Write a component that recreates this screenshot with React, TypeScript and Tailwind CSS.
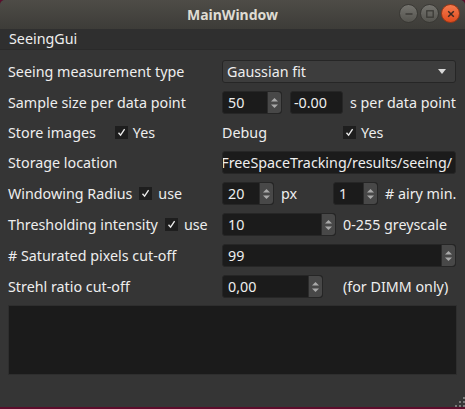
import type { ReactNode } from 'react'

const FONT = { fontFamily: '"Noto Sans", "DejaVu Sans", sans-serif' }

function Check() {
  return (
    <span className="flex h-[13px] w-[13px] shrink-0 items-center justify-center bg-[#1e1e1e]">
      <svg width="9" height="9" viewBox="0 0 9 9">
        <path d="M1.5 4.8 L3.6 7.2 L7.6 1.2" fill="none" stroke="#e8e8e8" strokeWidth="1.4" />
      </svg>
    </span>
  )
}

function Arrows() {
  return (
    <svg width="9" height="14" viewBox="0 0 9 14">
      <path d="M1 5.5 L4.5 2 L8 5.5 Z" fill="#a9a9a9" />
      <path d="M1 8.5 L4.5 12 L8 8.5 Z" fill="#a9a9a9" />
    </svg>
  )
}

function Spin({ value, w }: { value: string; w: string }) {
  return (
    <div className={`flex h-[23px] ${w} shrink-0 rounded-[3px] border border-[#262626] bg-[#1b1b1b]`}>
      <span className="flex flex-1 items-center pl-[5px] text-[#eeeeee]">{value}</span>
      <span className="flex w-[14px] items-center justify-center rounded-r-[3px] border-l border-[#2c2c2c] bg-[#484848]">
        <Arrows />
      </span>
    </div>
  )
}

function Field({ value, w }: { value: string; w: string }) {
  return (
    <div className={`flex h-[23px] ${w} shrink-0 items-center overflow-hidden rounded-[3px] border border-[#262626] bg-[#1b1b1b] pl-[3px] text-[#eeeeee]`}>
      {value}
    </div>
  )
}

function Row({ label, children, h = 'h-[23px]' }: { label: ReactNode; children: ReactNode; h?: string }) {
  return (
    <div className={`flex ${h} items-center whitespace-nowrap`}>
      <div className="flex w-[214px] shrink-0 items-center">{label}</div>
      <div className="flex flex-1 items-center">{children}</div>
    </div>
  )
}

function TitleButton({ kind }: { kind: 'min' | 'max' | 'close' }) {
  const bg =
    kind === 'close'
      ? 'bg-gradient-to-b from-[#f47a4c] to-[#df4b1c] border-[#9c3817]'
      : 'bg-gradient-to-b from-[#75746f] to-[#55544f] border-[#3a3935]'
  return (
    <span className={`flex h-[19px] w-[19px] items-center justify-center rounded-full border ${bg}`}>
      <svg width="10" height="10" viewBox="0 0 10 10">
        {kind === 'min' && <path d="M1.5 5 H8.5" stroke="#3b3a36" strokeWidth="1.5" />}
        {kind === 'max' && <rect x="1.8" y="1.8" width="6.4" height="6.4" fill="none" stroke="#3b3a36" strokeWidth="1.3" />}
        {kind === 'close' && <path d="M2.2 2.2 L7.8 7.8 M7.8 2.2 L2.2 7.8" stroke="#3b2a22" strokeWidth="1.5" />}
      </svg>
    </span>
  )
}

export default function App() {
  return (
    <div className="flex h-[409px] w-[465px] flex-col overflow-hidden bg-[#5c0d2c]" style={FONT}>
      <div className="flex h-[407px] flex-col overflow-hidden rounded-t-[5px] bg-[#353535]">
        {/* title bar */}
        <div className="relative flex h-[29px] shrink-0 items-center justify-center bg-gradient-to-b from-[#4e4c47] to-[#3d3c38]">
          <span className="text-[14px] font-bold text-[#dfdbd2]">MainWindow</span>
          <div className="absolute right-[5px] top-[4px] flex gap-[2px]">
            <TitleButton kind="min" />
            <TitleButton kind="max" />
            <TitleButton kind="close" />
          </div>
        </div>

        {/* menu bar */}
        <div className="flex h-[21px] shrink-0 items-center border-b border-[#2a2a2a] bg-[#2f2f2f] pl-[9px] text-[14.3px] text-[#eeeeee]">
          SeeingGui
        </div>

        <div className="flex flex-col gap-[8px] px-[8px] pt-[10px] text-[14.3px] text-[#eeeeee]">
          <Row label="Seeing measurement type">
            <div className="flex h-[23px] w-[234px] items-center justify-between rounded-[3px] border border-[#262626] bg-[#3d3d3d] pl-[4px] pr-[9px]">
              <span>Gaussian fit</span>
              <svg width="8" height="5" viewBox="0 0 8 5">
                <path d="M0 0 H8 L4 5 Z" fill="#d8d8d8" />
              </svg>
            </div>
          </Row>

          <Row label="Sample size per data point">
            <Spin value="50" w="w-[60px]" />
            <div className="ml-[8px]">
              <Field value="-0.00" w="w-[53px]" />
            </div>
            <span className="ml-[7px]">s per data point</span>
          </Row>

          <Row
            h="h-[21px]"
            label={
              <>
                <span>Store images</span>
                <span className="ml-[19px]"><Check /></span>
                <span className="ml-[5px]">Yes</span>
              </>
            }
          >
            <span className="w-[121px]">Debug</span>
            <Check />
            <span className="ml-[5px]">Yes</span>
          </Row>

          <Row label="Storage location">
            <div className="flex h-[23px] w-[234px] items-center justify-end overflow-hidden rounded-[3px] border border-[#262626] bg-[#1b1b1b] pr-[3px]">
              FreeSpaceTracking/results/seeing/
            </div>
          </Row>

          <Row
            label={
              <>
                <span>Windowing Radius</span>
                <span className="ml-[7px]"><Check /></span>
                <span className="ml-[6px]">use</span>
              </>
            }
          >
            <Spin value="20" w="w-[52px]" />
            <span className="ml-[7px] w-[52px]">px</span>
            <Spin value="1" w="w-[45px]" />
            <span className="ml-[7px]"># airy min.</span>
          </Row>

          <Row
            label={
              <>
                <span>Thresholding intensity</span>
                <span className="ml-[7px]"><Check /></span>
                <span className="ml-[6px]">use</span>
              </>
            }
          >
            <Spin value="10" w="w-[114px]" />
            <span className="ml-[7px]">0-255 greyscale</span>
          </Row>

          <Row label="# Saturated pixels cut-off">
            <Spin value="99" w="w-[234px]" />
          </Row>

          <Row label="Strehl ratio cut-off">
            <Spin value="0,00" w="w-[101px]" />
            <span className="ml-[20px]">(for DIMM only)</span>
          </Row>

          <div className="mt-[-1px] h-[70px] w-[449px] border border-[#2e2e2e] bg-[#1b1b1b]" />
        </div>

        <div className="relative flex-1">
          <svg className="absolute bottom-0 right-0" width="12" height="12" viewBox="0 0 12 12">
            {[
              [10, 2], [10, 6], [6, 6], [10, 10], [6, 10], [2, 10],
            ].map(([x, y]) => (
              <rect key={`${x}-${y}`} x={x} y={y} width="2" height="2" fill="#7a7a7a" />
            ))}
          </svg>
        </div>
      </div>
    </div>
  )
}
